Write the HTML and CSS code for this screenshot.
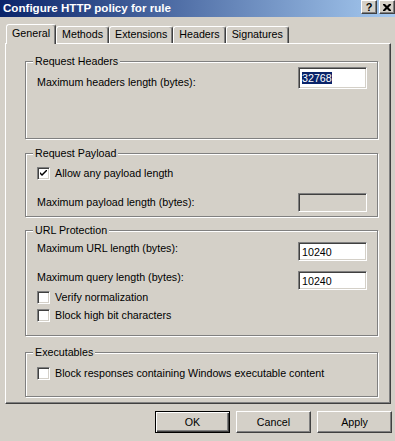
FILE: index.html
```html
<!DOCTYPE html>
<html lang="en">
<head>
    <meta charset="UTF-8">
    <title>Configure HTTP policy for rule</title>
    <link rel="stylesheet" href="styles.css">
</head>
<body>

    <div class="dialog">
        <div class="titlebar">
            <span class="title">Configure HTTP policy for rule</span>
            <div class="caption-buttons">
                <span class="caption-btn">?</span>
                <span class="caption-btn">
                    <svg width="8" height="7" viewBox="0 0 8 7">
                        <path d="M0 0h2l2 2 2-2h2v1l-2.5 2.5 2.5 2.5v1h-2l-2-2-2 2h-2v-1l2.5-2.5-2.5-2.5z" fill="#000"/>
                    </svg>
                </span>
            </div>
        </div>

        <div class="tabs">
            <div class="tab active">General</div>
            <div class="tab">Methods</div>
            <div class="tab">Extensions</div>
            <div class="tab">Headers</div>
            <div class="tab">Signatures</div>
        </div>

        <div class="panel">
            <div class="group group-headers">
                <div class="group-title">Request Headers</div>
                <div class="field field-headers">
                    <span class="label">Maximum headers length (bytes):</span>
                    <div class="edit edit-tall"><span class="selected">32768</span></div>
                </div>
            </div>

            <div class="group group-payload">
                <div class="group-title">Request Payload</div>
                <label class="option option-any">
                    <span class="check checked">
                        <svg width="7" height="7" viewBox="0 0 7 7">
                            <path d="M0 2l2 2 5-5v2l-5 5-2-2z" fill="#000"/>
                        </svg>
                    </span>
                    Allow any payload length
                </label>
                <div class="field field-payload">
                    <span class="label">Maximum payload length (bytes):</span>
                    <div class="edit disabled"></div>
                </div>
            </div>

            <div class="group group-url">
                <div class="group-title">URL Protection</div>
                <div class="field field-url">
                    <span class="label">Maximum URL length (bytes):</span>
                    <div class="edit">10240</div>
                </div>
                <div class="field field-query">
                    <span class="label">Maximum query length (bytes):</span>
                    <div class="edit">10240</div>
                </div>
                <label class="option option-verify">
                    <span class="check"></span>
                    Verify normalization
                </label>
                <label class="option option-highbit">
                    <span class="check"></span>
                    Block high bit characters
                </label>
            </div>

            <div class="group group-exec">
                <div class="group-title">Executables</div>
                <label class="option option-exec">
                    <span class="check"></span>
                    Block responses containing Windows executable content
                </label>
            </div>
        </div>

        <div class="buttons">
            <button class="btn default">OK</button>
            <button class="btn">Cancel</button>
            <button class="btn">Apply</button>
        </div>
    </div>

</body>
</html>
```

FILE: styles.css
```css
:root {
    --face: #d4d0c8;
    --shadow: #808080;
    --dark: #404040;
    --light: #ffffff;
    --title-left: #0a246a;
    --title-right: #a6caf0;
}

* {
    box-sizing: border-box;
}

body {
    margin: 0;
    background-color: var(--face);
    font-family: "Liberation Sans", Arial, sans-serif;
    font-size: 10.7px;
    line-height: 13px;
    color: #000;
}

.dialog {
    width: 395px;
    height: 441px;
    background-color: var(--face);
    overflow: hidden;
}

/* Titelleiste */
.titlebar {
    height: 17px;
    display: flex;
    justify-content: space-between;
    align-items: flex-start;
    background: linear-gradient(to right, var(--title-left), var(--title-right));
}

.title {
    color: var(--light);
    font-weight: bold;
    font-size: 11.6px;
    line-height: 16px;
    padding-left: 3px;
}

.caption-buttons {
    display: flex;
    gap: 2px;
}

.caption-btn {
    width: 16px;
    height: 14px;
    display: flex;
    justify-content: center;
    align-items: center;
    background-color: var(--face);
    border: 1px solid;
    border-color: var(--light) var(--dark) var(--dark) var(--light);
    box-shadow: inset -1px -1px var(--shadow);
    font-weight: bold;
    font-size: 11px;
}

/* Reiter */
.tabs {
    display: flex;
    align-items: flex-end;
    height: 26px;
    padding-left: 6px;
}

.tab {
    height: 17px;
    padding: 0 5px;
    border: 1px solid;
    border-bottom: 0;
    border-color: var(--light) var(--dark) transparent var(--light);
    border-radius: 3px 3px 0 0;
    box-shadow: inset -1px 0 var(--shadow);
    line-height: 15px;
}

.tab.active {
    height: 20px;
    margin-bottom: -1px;
    position: relative;
    z-index: 1;
    background-color: var(--face);
    line-height: 16px;
}

.panel {
    width: 386px;
    height: 361px;
    margin-left: 5px;
    padding: 17px 0 0 19px;
    border: 1px solid;
    border-color: var(--light) var(--dark) var(--dark) var(--light);
    box-shadow: inset -1px -1px var(--shadow);
}

/* Gruppenrahmen */
.group {
    width: 353px;
    border: 1px solid var(--shadow);
    box-shadow: inset 1px 1px var(--light), 1px 1px var(--light);
}

.group-headers { height: 78px; }
.group-payload { height: 64px; margin-top: 14px; }
.group-url     { height: 106px; margin-top: 13px; }
.group-exec    { height: 45px; margin-top: 16px; }

.group-title {
    width: max-content;
    margin: -7px 0 0 7px;
    padding: 0 2px;
    background-color: var(--face);
}

.field {
    display: flex;
    justify-content: space-between;
    align-items: flex-start;
    padding: 0 10px 0 11px;
}

.field-headers { margin-top: -1px; }
.field-headers .label { padding-top: 9px; }
.field-payload { margin-top: 13px; }
.field-payload .label { padding-top: 3px; }
.field-url { margin-top: 5px; }
.field-query { margin-top: 10px; }

.edit {
    width: 69px;
    height: 19px;
    padding: 3px 3px 0;
    background-color: var(--light);
    border: 1px solid;
    border-color: var(--shadow) var(--light) var(--light) var(--shadow);
    box-shadow: inset 1px 1px var(--dark), inset -1px -1px var(--face);
}

.edit-tall {
    height: 22px;
    padding-top: 4px;
}

.edit.disabled {
    background-color: var(--face);
}

.selected {
    background-color: var(--title-left);
    color: var(--light);
}

/* Kontrollkästchen */
.option {
    display: flex;
    align-items: center;
    gap: 5px;
    padding-left: 11px;
}

.option-any     { margin-top: 7px; }
.option-verify  { margin-top: 1px; }
.option-highbit { margin-top: 5px; }
.option-exec    { margin-top: 8px; }

.check {
    width: 13px;
    height: 13px;
    display: flex;
    justify-content: center;
    align-items: center;
    background-color: var(--light);
    border: 1px solid;
    border-color: var(--shadow) var(--light) var(--light) var(--shadow);
    box-shadow: inset 1px 1px var(--dark), inset -1px -1px var(--face);
}

/* Schaltflächen */
.buttons {
    display: flex;
    justify-content: flex-end;
    gap: 6px;
    margin-top: 7px;
    padding-right: 3px;
}

.btn {
    width: 75px;
    height: 22px;
    padding: 0;
    font: inherit;
    color: #000;
    background-color: var(--face);
    border: 1px solid;
    border-color: var(--light) var(--dark) var(--dark) var(--light);
    box-shadow: inset -1px -1px var(--shadow);
}

.btn.default {
    border-color: #000;
    box-shadow: inset 1px 1px var(--light), inset -1px -1px var(--dark), inset -2px -2px var(--shadow);
}
```
